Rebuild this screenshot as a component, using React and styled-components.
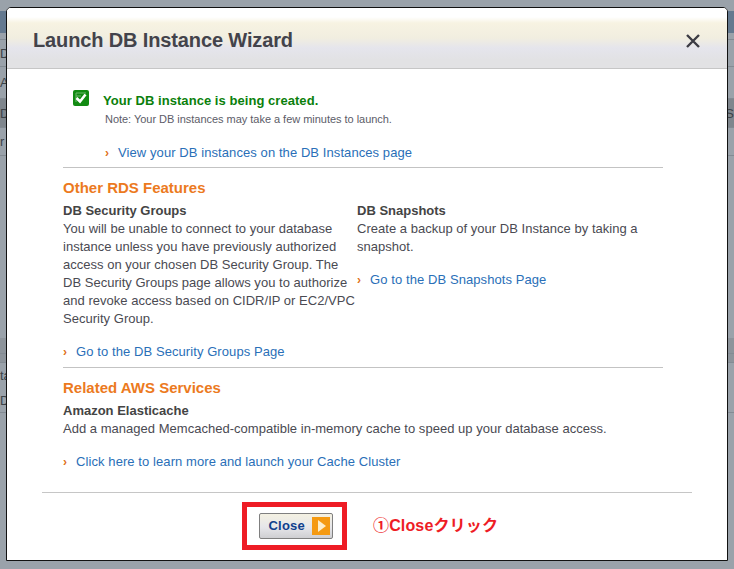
import React from "react";
import styled, { createGlobalStyle } from "styled-components";

const Global = createGlobalStyle`
  html, body { margin: 0; padding: 0; width: 734px; height: 569px; overflow: hidden; background: #9aa2aa; }
  #root { width: 734px; height: 569px; }
  * { box-sizing: border-box; }
`;

const Page = styled.div`
  position: relative;
  width: 734px;
  height: 569px;
  background: #9aa2aa;
  font-family: "Liberation Sans", Arial, sans-serif;
  overflow: hidden;
`;

const Backdrop = styled.div`
  display: flex;
  flex-direction: column;
  padding-top: 11px;
  color: #3c4248;
  font-size: 13px;
`;

const BackRow = styled.div`
  height: ${(p) => p.$h}px;
  flex: none;
  background: ${(p) => p.$bg || "transparent"};
  border-bottom: ${(p) => (p.$line ? "1px solid #838b93" : "none")};
  line-height: ${(p) => p.$h}px;
  display: flex;
  justify-content: space-between;
`;

const Modal = styled.div`
  position: absolute;
  left: 6px;
  top: 7px;
  width: 722px;
  height: 554px;
  background: #fff;
  border: 1px solid #111;
  border-radius: 5px 5px 0 0;
  display: flex;
  flex-direction: column;
  color: #444;
  font-size: 13px;
  line-height: 18px;
  overflow: hidden;
`;

const Header = styled.header`
  height: 61px;
  flex: none;
  display: flex;
  align-items: center;
  justify-content: space-between;
  padding: 3px 27px 0 26px;
  border-bottom: 1px solid #c6c6c6;
  background: linear-gradient(#fff 0, #fff 9px, #f7f3e2 15px, #f1eee0 30px, #e5e5ec 40px, #e2e2e4 52px);
`;

const Title = styled.h1`
  margin: 0;
  font-size: 20px;
  line-height: 24px;
  font-weight: bold;
  letter-spacing: -0.13px;
  color: #43434b;
`;

const CloseX = styled.svg`
  width: 14px;
  height: 14px;
  margin-top: 2px;
  stroke: #3c3c44;
  stroke-width: 2.4;
  fill: none;
`;

const Body = styled.div`
  flex: 1;
  display: flex;
  flex-direction: column;
  padding: 21px 64px 0 56px;
`;

const StatusRow = styled.div`
  display: flex;
  align-items: flex-start;
  gap: 14px;
  padding-left: 10px;
`;

const StatusText = styled.div`
  display: flex;
  flex-direction: column;
`;

const Success = styled.div`
  font-weight: bold;
  color: #0b7f0b;
  font-size: 13px;
  line-height: 22px;
  letter-spacing: 0.05px;
`;

const Note = styled.div`
  font-size: 11px;
  line-height: 14px;
  margin-left: 2px;
  letter-spacing: -0.03px;
  color: #5c5c68;
`;

const LinkRow = styled.div`
  display: flex;
  align-items: baseline;
  gap: 9px;
  color: #2a6fb8;
  margin: ${(p) => p.$top ?? 16}px 0 0 ${(p) => p.$left ?? 0}px;
  line-height: 18px;
  letter-spacing: 0.08px;
`;

const Chevron = styled.span`
  color: #e0701a;
  font-weight: bold;
  font-size: 12px;
  line-height: 1;
`;

const Rule = styled.hr`
  border: 0;
  height: 1px;
  flex: none;
  background: #c3c3c3;
  margin: ${(p) => p.$top ?? 6}px 0 0 0;
`;

const SectionTitle = styled.h2`
  margin: 10px 0 0;
  font-size: 15px;
  line-height: 20px;
  font-weight: bold;
  color: #ec7a1e;
`;

const Columns = styled.div`
  display: grid;
  grid-template-columns: 294px 1fr;
`;

const Column = styled.div``;

const ItemTitle = styled.div`
  font-weight: bold;
  color: #444;
  margin-top: ${(p) => p.$top ?? 4}px;
`;

const Para = styled.p`
  margin: 0;
  color: #4a4a52;
  letter-spacing: 0.02px;
`;

const Footer = styled.footer`
  flex: none;
  margin: 0 35px;
  height: 68px;
  border-top: 1px solid #c6c6c6;
  display: grid;
  grid-template-columns: 200px auto 1fr;
  align-items: center;
`;

const Highlight = styled.div`
  grid-column: 2;
  width: 105px;
  height: 48px;
  border: 5px solid #ee1c25;
  margin-top: -2px;
  display: flex;
  align-items: center;
  justify-content: center;
`;

const CloseButton = styled.button`
  width: 74px;
  height: 26px;
  margin-left: 2px;
  padding: 0 2px 0 9px;
  display: flex;
  align-items: center;
  justify-content: space-between;
  border: 1px solid #7f7f7f;
  border-radius: 2px;
  background: linear-gradient(#f4f1e2, #e6e6ea 55%, #cfcfd2);
  color: #0f3f8c;
  font: bold 13px "Liberation Sans", Arial, sans-serif;
  letter-spacing: 0.2px;
`;

const Annotation = styled.div`
  margin-left: 26px;
  margin-top: -2px;
  color: #ee1c25;
  font-weight: bold;
  font-size: 16px;
  letter-spacing: 0.15px;
  font-family: "Liberation Sans", "Noto Sans CJK JP", sans-serif;
`;

export default function App() {
  return (
    <Page>
      <Global />
      <Backdrop>
        <BackRow $h={22} $bg="#64798f" />
        <BackRow $h={7} $line />
        <BackRow $h={27} $line>D</BackRow>
        <BackRow $h={32} $line>A</BackRow>
        <BackRow $h={29} $bg="#7f868d" $line><span>D</span><span>S</span></BackRow>
        <BackRow $h={28} $line>r</BackRow>
        <BackRow $h={182} />
        <BackRow $h={16} $bg="#8d949b" $line />
        <BackRow $h={9} $bg="#8d949b" $line />
        <BackRow $h={25}>ta</BackRow>
        <BackRow $h={25} $line>D</BackRow>
      </Backdrop>
      <Modal>
        <Header>
          <Title>Launch DB Instance Wizard</Title>
          <CloseX viewBox="0 0 14 14"><path d="M1 1 L13 13 M13 1 L1 13" /></CloseX>
        </Header>
        <Body>
          <StatusRow>
            <svg width="16" height="16" viewBox="0 0 16 16">
              <rect width="16" height="16" rx="2" fill="#128a12" />
              <path d="M3 3 H13 M3 6 H8 M3 3 V12" stroke="#6bb86b" strokeWidth="1" fill="none" />
              <path d="M3.5 8 L7 11.5 L12.5 4.5" fill="none" stroke="#fff" strokeWidth="2.6" />
            </svg>
            <StatusText>
              <Success>Your DB instance is being created.</Success>
              <Note>Note: Your DB instances may take a few minutes to launch.</Note>
            </StatusText>
          </StatusRow>
          <LinkRow $left={42} $top={18}><Chevron>›</Chevron>View your DB instances on the DB Instances page</LinkRow>
          <Rule $top={5} />
          <SectionTitle>Other RDS Features</SectionTitle>
          <Columns>
            <Column>
              <ItemTitle>DB Security Groups</ItemTitle>
              <Para>You will be unable to connect to your database instance unless you have previously authorized access on your chosen DB Security Group. The DB Security Groups page allows you to authorize and revoke access based on CIDR/IP or EC2/VPC Security Group.</Para>
            </Column>
            <Column>
              <ItemTitle>DB Snapshots</ItemTitle>
              <Para>Create a backup of your DB Instance by taking a snapshot.</Para>
              <LinkRow $top={15}><Chevron>›</Chevron>Go to the DB Snapshots Page</LinkRow>
            </Column>
          </Columns>
          <LinkRow $top={15}><Chevron>›</Chevron>Go to the DB Security Groups Page</LinkRow>
          <Rule $top={6} />
          <SectionTitle>Related AWS Services</SectionTitle>
          <ItemTitle>Amazon Elasticache</ItemTitle>
          <Para>Add a managed Memcached-compatible in-memory cache to speed up your database access.</Para>
          <LinkRow $top={15}><Chevron>›</Chevron>Click here to learn more and launch your Cache Cluster</LinkRow>
        </Body>
        <Footer>
          <Highlight>
            <CloseButton>
              Close
              <svg width="18" height="18" viewBox="0 0 18 18">
                <rect width="18" height="18" fill="#f59a12" />
                <path d="M6 3 L14 9 L6 15 Z" fill="#fdeecb" />
              </svg>
            </CloseButton>
          </Highlight>
          <Annotation>①Closeクリック</Annotation>
        </Footer>
      </Modal>
    </Page>
  );
}
